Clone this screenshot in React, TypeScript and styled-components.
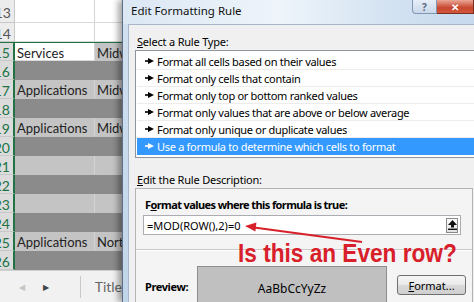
import React from "react";
import styled, { createGlobalStyle } from "styled-components";

// --- Data ---
type Tone = "white" | "light" | "dark";

interface SheetRow {
  num: number;
  tone: Tone;
  a?: string;
  b?: string;
  bTone?: Tone;
  selected?: boolean;
}

const rows: SheetRow[] = [
  { num: 13, tone: "white" },
  { num: 14, tone: "white" },
  { num: 15, tone: "white", a: "Services", b: "Midwest", bTone: "light", selected: true },
  { num: 16, tone: "dark", selected: true },
  { num: 17, tone: "light", a: "Applications", b: "Midwest", selected: true },
  { num: 18, tone: "dark", selected: true },
  { num: 19, tone: "light", a: "Applications", b: "Midwest", selected: true },
  { num: 20, tone: "dark", selected: true },
  { num: 21, tone: "light", selected: true },
  { num: 22, tone: "dark", selected: true },
  { num: 23, tone: "light", selected: true },
  { num: 24, tone: "dark", selected: true },
  { num: 25, tone: "light", a: "Applications", b: "North", selected: true },
  { num: 26, tone: "dark", selected: true },
];

const ruleTypes = [
  "Format all cells based on their values",
  "Format only cells that contain",
  "Format only top or bottom ranked values",
  "Format only values that are above or below average",
  "Format only unique or duplicate values",
  "Use a formula to determine which cells to format",
];

const toneColor: Record<Tone, string> = {
  white: "#ffffff",
  light: "#c4c4c4",
  dark: "#8b8b8b",
};

// --- Icons ---
const RuleArrow = () => (
  <svg width="9" height="6" viewBox="0 0 9 6">
    <rect x="0" y="2.2" width="4" height="1.6" fill="currentColor" />
    <polygon points="3,0 9,3 3,6" fill="currentColor" />
  </svg>
);

const CollapseIcon = () => (
  <svg width="9" height="10" viewBox="0 0 9 10">
    <polygon points="4.5,0 9,5 6,5 6,7.5 3,7.5 3,5 0,5" fill="#111" />
    <rect x="0" y="8.6" width="9" height="1.4" fill="#111" />
  </svg>
);

export default function App() {
  return (
    <>
      <GlobalStyle />
      <Screen>
        <Sheet>
          <Grid>
            {rows.map((r, i) => (
              <Row key={r.num} $h={i === 0 ? 23 : 19} $top={r.num === 15}>
                <RowHead $selected={!!r.selected}>
                  <span>{r.num}</span>
                </RowHead>
                <Cell $tone={r.tone}>{r.a}</Cell>
                <Cell $tone={r.bTone || r.tone}>{r.b}</Cell>
              </Row>
            ))}
          </Grid>
          <TabBar>
            <NavArrow $dim>◀</NavArrow>
            <NavArrow>▶</NavArrow>
            <TabDivider />
            <TabName>Title</TabName>
          </TabBar>
        </Sheet>

        <Dialog>
          <TitleBar>
            <TitleText>Edit Formatting Rule</TitleText>
            <CaptionButtons>
              <HelpButton>?</HelpButton>
              <CloseButton>✕</CloseButton>
            </CaptionButtons>
          </TitleBar>
          <Client>
            <Label>
              <u>S</u>elect a Rule Type:
            </Label>
            <ListBox>
              {ruleTypes.map((t, i) => (
                <ListItem key={t} $selected={i === ruleTypes.length - 1}>
                  <RuleArrow />
                  <span>{t}</span>
                </ListItem>
              ))}
            </ListBox>

            <Label $gap={14}>
              <u>E</u>dit the Rule Description:
            </Label>
            <DescBox>
              <BoldLabel>
                F<u>o</u>rmat values where this formula is true:
              </BoldLabel>
              <FormulaInput>
                <span>=MOD(ROW(),2)=0</span>
                <CollapseButton>
                  <CollapseIcon />
                </CollapseButton>
              </FormulaInput>
              <Divider />
              <PreviewRow>
                <PreviewLabel>Preview:</PreviewLabel>
                <PreviewBox>AaBbCcYyZz</PreviewBox>
                <FormatButton>
                  <u>F</u>ormat...
                </FormatButton>
              </PreviewRow>
            </DescBox>
          </Client>
        </Dialog>

        <Callout>
          <svg width="130" height="30" viewBox="0 0 130 30">
            <line x1="122" y1="22" x2="14" y2="7.4" stroke="#d8202a" strokeWidth="2" />
            <polygon points="5,6 16.4,2.6 15.4,11.6" fill="#d8202a" />
          </svg>
        </Callout>
        <CalloutText>Is this an Even row?</CalloutText>
      </Screen>
    </>
  );
}

// --- CSS ---

const GlobalStyle = createGlobalStyle`
  html, body {
    margin: 0;
    padding: 0;
    width: 474px;
    height: 302px;
    overflow: hidden;
    background: #ffffff;
  }
  * { box-sizing: border-box; }
`;

const Screen = styled.div`
  position: relative;
  display: flex;
  width: 474px;
  height: 302px;
  overflow: hidden;
  font-family: "Liberation Sans", Arial, sans-serif;
`;

const Sheet = styled.div`
  flex: 0 0 122px;
  display: flex;
  flex-direction: column;
  overflow: hidden;
  font-family: Lato, "Liberation Sans", sans-serif;
`;

const Grid = styled.div`
  flex-shrink: 0;
  display: flex;
  flex-direction: column;
`;

const Row = styled.div<{ $h: number; $top: boolean }>`
  display: grid;
  grid-template-columns: 15px 80px 40px;
  height: ${(p) => p.$h}px;
  border-top: ${(p) => (p.$top ? "1px solid #217346" : "none")};
`;

const RowHead = styled.div<{ $selected: boolean }>`
  display: flex;
  justify-content: flex-end;
  align-items: center;
  overflow: hidden;
  padding: 2px 3px 0 0;
  font-size: 14px;
  color: ${(p) => (p.$selected ? "#217346" : "#555")};
  background: ${(p) => (p.$selected ? "#dcdcdc" : "#ececec")};
  border-bottom: 1px solid #c8c8c8;
  border-right: ${(p) => (p.$selected ? "2px solid #217346" : "1px solid #c8c8c8")};
  white-space: nowrap;
`;

const Cell = styled.div<{ $tone: Tone }>`
  display: flex;
  align-items: center;
  padding: 2px 0 0 2px;
  font-size: 13px;
  color: #222;
  white-space: nowrap;
  overflow: hidden;
  background: ${(p) => toneColor[p.$tone]};
  border-bottom: 1px solid ${(p) => (p.$tone === "white" ? "#dadada" : "transparent")};
  border-right: 1px solid ${(p) => (p.$tone === "dark" ? "transparent" : "#d4d4d4")};
`;

const TabBar = styled.div`
  flex: 1;
  display: flex;
  align-items: center;
  background: #f1f1f1;
  border-top: 1px solid #cfcfcf;
  padding-left: 10px;
`;

const NavArrow = styled.span<{ $dim?: boolean }>`
  width: 27px;
  font-size: 8px;
  color: ${(p) => (p.$dim ? "#c4c4c4" : "#444")};
  text-align: center;
`;

const TabDivider = styled.div`
  width: 1px;
  height: 22px;
  margin-left: 22px;
  background: #c9c9c9;
`;

const TabName = styled.span`
  margin-left: 14px;
  font-size: 14px;
  color: #666;
`;

const Dialog = styled.div`
  flex: 0 0 352px;
  display: flex;
  flex-direction: column;
  overflow: hidden;
  background: linear-gradient(180deg, #d2e1f1, #c1d5ea);
  border-left: 1px solid #5d6f85;
  box-shadow: -4px 0 6px rgba(0, 0, 0, 0.35);
  padding-left: 5px;
  font-family: "Noto Sans", "Liberation Sans", sans-serif;
  font-size: 11px;
  color: #000;
`;

const TitleBar = styled.div`
  flex: 0 0 24px;
  display: flex;
  align-items: flex-start;
  margin-left: -5px;
  padding-left: 8px;
  background: linear-gradient(90deg, #dbe7f4 0%, #eef4fa 45%, #d4e3f2 75%, #c6d9ed 100%);
`;

const TitleText = styled.span`
  margin-top: 3px;
  font-size: 11.5px;
  color: #111;
`;

const CaptionButtons = styled.div`
  margin-left: auto;
  display: flex;
  flex-shrink: 0;
`;

const HelpButton = styled.div`
  width: 25px;
  height: 14px;
  display: flex;
  align-items: center;
  justify-content: center;
  border: 1px solid #8196b3;
  border-top: none;
  border-radius: 0 0 0 4px;
  background: linear-gradient(180deg, #e7eef7, #c9d8ea);
  color: #5a6a80;
  font-size: 10px;
  font-weight: bold;
`;

const CloseButton = styled.div`
  width: 37px;
  height: 14px;
  display: flex;
  align-items: center;
  justify-content: center;
  border: 1px solid #7a2e22;
  border-top: none;
  border-left: none;
  background: linear-gradient(180deg, #e9a796, #c8462f 60%, #d0583c);
  color: #fff;
  font-size: 10px;
  font-weight: bold;
`;

const Client = styled.div`
  flex: 1 1 auto;
  min-height: 0;
  display: flex;
  flex-direction: column;
  background: #f0f0f0;
  border-left: 1px solid #a7b6c8;
  border-top: 1px solid #a7b6c8;
  padding: 9px 1px 0 6px;

  & > * {
    flex-shrink: 0;
  }
`;

const Label = styled.div<{ $gap?: number }>`
  height: 16px;
  line-height: 15px;
  margin: ${(p) => p.$gap || 0}px 0 0 2px;
  letter-spacing: -0.2px;
  white-space: nowrap;
`;

const ListBox = styled.div`
  height: 108px;
  margin-right: -12px;
  padding: 2px 0;
  background: #fff;
  border: 1px solid #8f959c;
`;

const ListItem = styled.div<{ $selected: boolean }>`
  height: 17px;
  display: flex;
  align-items: center;
  gap: 3px;
  margin-left: 1px;
  padding-left: 8px;
  white-space: nowrap;
  letter-spacing: -0.3px;
  background: ${(p) => (p.$selected ? "#3399ff" : "#fff")};
  color: ${(p) => (p.$selected ? "#fff" : "#000")};
  border-bottom: 1px solid ${(p) => (p.$selected ? "#3399ff" : "#ececec")};
`;

const DescBox = styled.div`
  display: flex;
  flex-direction: column;
  height: 140px;
  border: 1px solid #b4b4b4;
  border-bottom: none;
  background: #f4f4f4;
  padding-top: 8px;

  & > * {
    flex-shrink: 0;
  }
`;

const BoldLabel = styled.div`
  height: 16px;
  line-height: 16px;
  padding-left: 9px;
  font-weight: bold;
  letter-spacing: -0.6px;
  white-space: nowrap;
`;

const FormulaInput = styled.div`
  height: 20px;
  margin: 2px 0 0 7px;
  width: 318px;
  display: flex;
  align-items: center;
  padding: 0 2px 0 3px;
  background: #fff;
  border: 1px solid #abadb3;
  font-size: 11px;

  span {
    flex: 1;
  }
`;

const CollapseButton = styled.div`
  width: 12px;
  height: 15px;
  display: flex;
  align-items: center;
  justify-content: center;
  border: 1px solid #8a8a8a;
  background: linear-gradient(180deg, #fbfbfb, #e2e2e2);
`;

const Divider = styled.div`
  height: 2px;
  margin-top: 14px;
  border-top: 1px solid #c9c9c9;
  border-bottom: 1px solid #ffffff;
`;

const PreviewRow = styled.div`
  display: flex;
  align-items: flex-start;
  margin-top: 15px;
  padding-left: 9px;
`;

const PreviewLabel = styled.div`
  width: 52px;
  margin-top: 13px;
  font-weight: bold;
  letter-spacing: -0.4px;
`;

const PreviewBox = styled.div`
  width: 190px;
  height: 42px;
  display: flex;
  justify-content: center;
  padding-top: 13px;
  background: #c0c0c0;
  border: 1px solid #8e8e8e;
  font-size: 12px;
`;

const FormatButton = styled.div`
  width: 69px;
  height: 20px;
  margin: 9px 0 0 10px;
  display: flex;
  align-items: center;
  justify-content: center;
  border: 1px solid #707070;
  border-radius: 3px;
  background: linear-gradient(180deg, #f6f6f6 0%, #e9e9e9 50%, #d9d9d9 51%, #cfcfcf 100%);
`;

const Callout = styled.div`
  position: absolute;
  left: 240px;
  top: 220px;
  width: 130px;
  height: 30px;
  pointer-events: none;
`;

const CalloutText = styled.div`
  position: absolute;
  left: 238px;
  top: 240px;
  font-family: "Liberation Sans", Arial, sans-serif;
  font-weight: bold;
  font-size: 26px;
  line-height: 26px;
  color: #d8202a;
  white-space: nowrap;
  transform: scaleX(0.87);
  transform-origin: left top;
`;
